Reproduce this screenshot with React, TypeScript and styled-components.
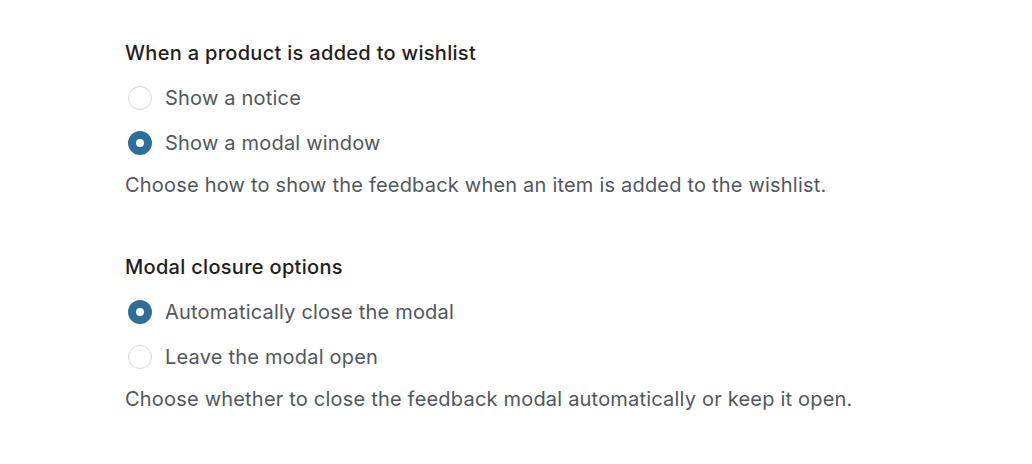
import React from "react";
import styled, { createGlobalStyle } from "styled-components";

const Global = createGlobalStyle`
  html, body { margin: 0; padding: 0; background: #ffffff; }
  body { font-family: Inter, "Noto Sans", sans-serif; -webkit-font-smoothing: antialiased; }
`;

const Page = styled.div`
  padding: 41px 0 0 125px;
  display: flex;
  flex-direction: column;
  gap: 58px;
`;

const Fieldset = styled.fieldset`
  border: 0;
  margin: 0;
  padding: 0;
  display: flex;
  flex-direction: column;
  min-width: 0;
`;

const Legend = styled.div`
  font-size: 20px;
  line-height: 24px;
  font-weight: 500;
  letter-spacing: 0.3px;
  color: #1e1e1e;
  margin-bottom: 21px;
`;

const Options = styled.div`
  display: flex;
  flex-direction: column;
  gap: 21px;
`;

const Option = styled.label`
  display: flex;
  align-items: center;
  gap: 13px;
  height: 24px;
  padding-left: 3px;
  font-size: 20px;
  line-height: 24px;
  letter-spacing: 0.2px;
  color: #50575e;
  cursor: pointer;
`;

const Radio = styled.span<{ $checked?: boolean }>`
  box-sizing: border-box;
  width: 24px;
  height: 24px;
  border-radius: 50%;
  flex: none;
  border: ${(p) => (p.$checked ? "8px solid #2d6f98" : "1px solid #d8d8d8")};
  background: #ffffff;
`;

const Help = styled.p`
  margin: 18px 0 0;
  font-size: 20px;
  line-height: 24px;
  letter-spacing: 0.2px;
  color: #50575e;
`;

type Group = {
  title: string;
  options: { label: string; checked: boolean }[];
  help: string;
};

const groups: Group[] = [
  {
    title: "When a product is added to wishlist",
    options: [
      { label: "Show a notice", checked: false },
      { label: "Show a modal window", checked: true },
    ],
    help: "Choose how to show the feedback when an item is added to the wishlist.",
  },
  {
    title: "Modal closure options",
    options: [
      { label: "Automatically close the modal", checked: true },
      { label: "Leave the modal open", checked: false },
    ],
    help: "Choose whether to close the feedback modal automatically or keep it open.",
  },
];

export default function App() {
  return (
    <>
      <Global />
      <Page>
        {groups.map((g) => (
          <Fieldset key={g.title}>
            <Legend>{g.title}</Legend>
            <Options>
              {g.options.map((o) => (
                <Option key={o.label}>
                  <Radio $checked={o.checked} />
                  {o.label}
                </Option>
              ))}
            </Options>
            <Help>{g.help}</Help>
          </Fieldset>
        ))}
      </Page>
    </>
  );
}
